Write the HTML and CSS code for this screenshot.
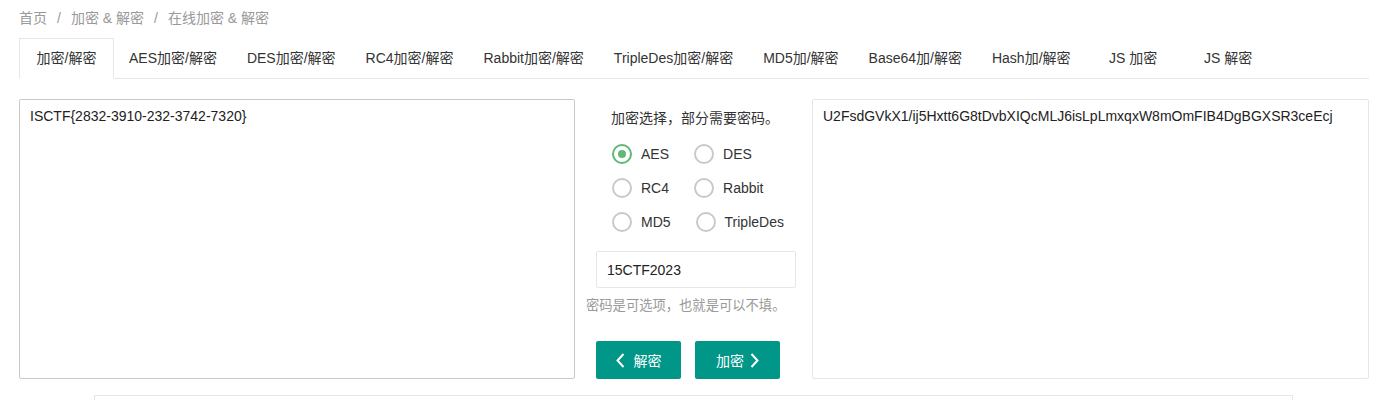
FILE: index.html
```html
<!DOCTYPE html>
<html lang="zh-CN">
<head>
<meta charset="utf-8">
<title>在线加密 &amp; 解密</title>
<link rel="stylesheet" href="styles.css">
</head>
<body>
<div class="page">
  <div class="breadcrumb">
    <a>首页</a><span class="sep">/</span><a>加密 &amp; 解密</a><span class="sep">/</span><a class="cur">在线加密 &amp; 解密</a>
  </div>
  <ul class="tabs">
    <li class="tab active">加密/解密</li>
    <li class="tab">AES加密/解密</li>
    <li class="tab">DES加密/解密</li>
    <li class="tab">RC4加密/解密</li>
    <li class="tab">Rabbit加密/解密</li>
    <li class="tab">TripleDes加密/解密</li>
    <li class="tab">MD5加/解密</li>
    <li class="tab">Base64加/解密</li>
    <li class="tab">Hash加/解密</li>
    <li class="tab">JS 加密</li>
    <li class="tab">JS 解密</li>
  </ul>
  <div class="main">
    <textarea class="area area-left">ISCTF{2832-3910-232-3742-7320}</textarea>
    <div class="mid">
      <div class="mid-title">加密选择，部分需要密码。</div>
      <div class="radios">
        <div class="radio-row">
          <span class="radio checked"><i class="dot"></i><span class="rlabel">AES</span></span>
          <span class="radio"><i class="dot"></i><span class="rlabel">DES</span></span>
        </div>
        <div class="radio-row">
          <span class="radio"><i class="dot"></i><span class="rlabel">RC4</span></span>
          <span class="radio"><i class="dot"></i><span class="rlabel">Rabbit</span></span>
        </div>
        <div class="radio-row">
          <span class="radio"><i class="dot"></i><span class="rlabel">MD5</span></span>
          <span class="radio"><i class="dot"></i><span class="rlabel">TripleDes</span></span>
        </div>
      </div>
      <input class="pwd" type="text" value="15CTF2023">
      <div class="hint">密码是可选项，也就是可以不填。</div>
      <div class="btns">
        <button class="btn"><svg class="chev" width="9" height="15" viewBox="0 0 9 15"><polyline points="7.5,1 1.5,7.5 7.5,14" fill="none" stroke="#fff" stroke-width="2"/></svg>解密</button>
        <button class="btn">加密<svg class="chev chev-r" width="9" height="15" viewBox="0 0 9 15"><polyline points="1.5,1 7.5,7.5 1.5,14" fill="none" stroke="#fff" stroke-width="2"/></svg></button>
      </div>
    </div>
    <textarea class="area area-right">U2FsdGVkX1/ij5Hxtt6G8tDvbXIQcMLJ6isLpLmxqxW8mOmFIB4DgBGXSR3ceEcj</textarea>
  </div>
  <div class="bottom-box"></div>
</div>
</body>
</html>
```
FILE: styles.css
```css
html, body {
  margin: 0;
  padding: 0;
  background: #fff;
}
body {
  font-family: "Liberation Sans", "Noto Sans CJK SC", sans-serif;
  font-size: 14px;
  color: #333;
  overflow: hidden;
}
.page {
  padding: 0 24px 0 19px;
}
.breadcrumb {
  padding-top: 8px;
  padding-bottom: 10px;
  line-height: 20px;
  height: 20px;
  color: #999;
  font-size: 14px;
}
.breadcrumb a {
  color: #999;
}
.breadcrumb .sep {
  margin: 0 10px;
  color: #999;
}
.tabs {
  display: flex;
  margin: 0;
  padding: 0;
  list-style: none;
  height: 40px;
  border-bottom: 1px solid #e6e6e6;
}
.tab {
  position: relative;
  line-height: 40px;
  min-width: 65px;
  padding: 0 15px;
  text-align: center;
  white-space: nowrap;
  color: #333;
}
.tab.active::after {
  content: "";
  position: absolute;
  left: 0;
  top: 0;
  right: 0;
  bottom: -1px;
  border: 1px solid #e6e6e6;
  border-bottom-color: #fff;
  box-sizing: border-box;
}
.main {
  display: flex;
  margin-top: 20px;
  height: 280px;
}
.area {
  box-sizing: border-box;
  height: 280px;
  margin: 0;
  padding: 6px 10px;
  font-family: inherit;
  font-size: 14px;
  line-height: 20px;
  color: #222;
  background: #fff;
  resize: none;
  outline: none;
  border-radius: 2px;
}
.area-left {
  width: 556px;
  border: 1px solid #c9c9c9;
}
.area-right {
  width: 557px;
  border: 1px solid #e6e6e6;
}
.mid {
  width: 237px;
  box-sizing: border-box;
  display: flex;
  flex-direction: column;
  padding-left: 21px;
}
.mid-title {
  margin-top: 9px;
  margin-left: 15px;
  line-height: 20px;
}
.radios {
  margin-top: 9px;
  margin-left: 16px;
}
.radio-row {
  display: flex;
  height: 34px;
  align-items: center;
}
.radio {
  display: flex;
  align-items: center;
  margin-right: 25px;
}
.dot {
  display: block;
  box-sizing: border-box;
  width: 20px;
  height: 20px;
  border: 2px solid #c9c9c9;
  border-radius: 50%;
  position: relative;
}
.radio.checked .dot {
  border-color: #5fb878;
}
.radio.checked .dot::after {
  content: "";
  position: absolute;
  left: 4px;
  top: 4px;
  width: 8px;
  height: 8px;
  border-radius: 50%;
  background: #5fb878;
}
.rlabel {
  margin-left: 9px;
  line-height: 20px;
  color: #333;
}
.pwd {
  box-sizing: border-box;
  margin: 12px 0 0 0;
  width: 200px;
  height: 38px;
  padding: 0 10px;
  border: 1px solid #e6e6e6;
  border-radius: 2px;
  font-family: inherit;
  font-size: 14px;
  color: #222;
  outline: none;
}
.hint {
  margin-top: 8px;
  margin-left: -10px;
  line-height: 20px;
  font-size: 13.3px;
  color: #999;
  white-space: nowrap;
}
.btns {
  display: flex;
  gap: 14px;
  margin-top: 25px;
}
.btn {
  display: flex;
  align-items: center;
  justify-content: center;
  width: 85px;
  height: 38px;
  padding: 0;
  border: none;
  border-radius: 2px;
  background: #009688;
  color: #fff;
  font-family: inherit;
  font-size: 14px;
}
.chev {
  margin-right: 9px;
}
.chev-r {
  margin-right: 0;
  margin-left: 6px;
}
.bottom-box {
  margin: 16px 0 0 75px;
  width: 1199px;
  height: 5px;
  border: 1px solid #e6e6e6;
  border-bottom: none;
  box-sizing: border-box;
}
```
